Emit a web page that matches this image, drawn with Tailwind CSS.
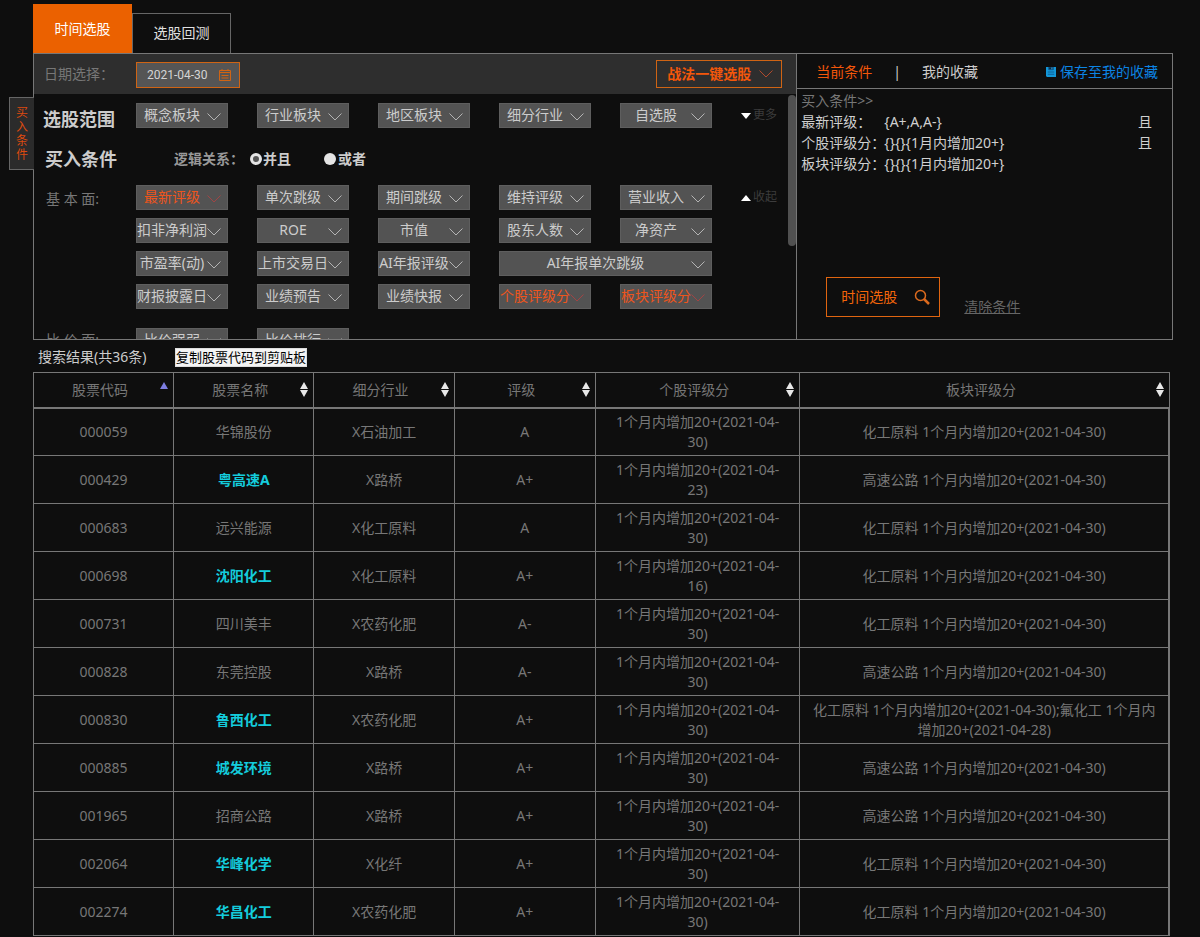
<!DOCTYPE html>
<html lang="zh-CN">
<head>
<meta charset="utf-8">
<title>时间选股</title>
<script src="https://cdn.jsdelivr.net/npm/@tailwindcss/browser@4"></script>
</head>
<body class="bg-[#0e0e0e] font-['Noto_Sans','Noto_Sans_CJK_SC',sans-serif] text-[14px] leading-5 text-[#777]">
<svg class="hidden" aria-hidden="true">
  <symbol id="chev" viewBox="0 0 14 8"><path d="M.5.5 7 7 13.500.5" fill="none" stroke="currentColor"/></symbol>
</svg>
<div class="h-screen overflow-hidden pt-1 pl-[33px] pr-[27px]">
  <nav class="flex h-[49px] items-end">
    <button class="h-[49px] w-[99px] bg-[#eb6100] text-white">时间选股</button>
    <button class="h-10 w-[99px] border border-b-0 border-[#666] pb-px text-[#e0e0e0]">选股回测</button>
  </nav>

  <main class="relative flex h-[287px] border border-[#777]">
    <div class="absolute top-[43px] -left-[25px] flex h-[73px] w-[25px] flex-col items-center justify-center border border-r-0 border-[#666] bg-[#2b2b2b] text-[12px] leading-[14px] text-[#dc4a10]"><span>买</span><span>入</span><span>条</span><span>件</span></div>

    <section class="flex min-w-0 flex-[763] flex-col">
      <div class="flex h-10 shrink-0 items-center bg-[#2e2e2e] pr-[14px] pl-[10px]">
        <label for="date" class="w-[92px]">日期选择：</label>
        <div class="mt-[2px] flex h-[26px] w-[104px] items-center border border-[#cf6414] bg-[#555] pr-2 pl-[10px]">
          <input id="date" value="2021-04-30" class="w-full min-w-0 bg-transparent font-['Roboto',sans-serif] text-[12px] text-[#d4d4d4] outline-none">
          <svg class="h-3 w-3 shrink-0 text-[#cf6414]" viewBox="0 0 12 12" fill="none" stroke="currentColor"><path d="M.5 1.500h11v10H.5zM.5 3.500h11M3 0v2M9 0v2M2.500 6.500h7M2.500 9h7"/></svg>
        </div>
        <button class="ml-auto flex h-7 w-[126px] items-center justify-between border border-[#cf6414] pr-2 pl-[10px] font-bold text-[#f4570a]"><span class="whitespace-nowrap">战法一键选股</span><svg class="h-2 w-[14px] text-[#b04a2c]"><use href="#chev"/></svg></button>
      </div>

      <div class="relative min-h-0 flex-1 overflow-hidden pt-[9px] pl-[9px]">
        <div class="absolute top-px right-0 h-[151px] w-2 rounded-sm bg-[#505050]"></div>
        <div class="flex">
          <h2 class="mt-1 w-[93px] text-[18px] leading-6 font-bold text-[#ccc]">选股范围</h2>
          <div class="grid grid-cols-5 gap-x-[29px]" data-filters="概念板块,行业板块,地区板块,细分行业,自选股"></div>
          <button class="ml-[29px] flex h-6 items-center gap-[2px] text-[12px] text-[#3c3c3c]"><svg class="mt-[2px] h-[6px] w-[10px] fill-white" viewBox="0 0 10 6"><path d="M0 0h10L5 6z"/></svg>更多</button>
        </div>
        <div class="mt-4 flex h-6 items-center">
          <h2 class="w-[131px] pl-[2px] text-[18px] leading-6 font-bold text-[#ccc]">买入条件</h2>
          <div class="flex items-center font-bold text-[#999]">
            <span class="w-[76px]">逻辑关系：</span>
            <label class="flex w-[74px] items-center gap-px text-[#ccc]"><input type="radio" name="rel" checked class="h-3 w-3 appearance-none rounded-full border-[3px] border-[#e4e4e4] bg-[#555]">并且</label>
            <label class="flex items-center gap-[2px] text-[#ccc]"><input type="radio" name="rel" class="h-3 w-3 appearance-none rounded-full bg-[#e4e4e4]">或者</label>
          </div>
        </div>
        <div class="mt-[14px] flex">
          <h3 class="mt-1 w-[93px] pl-[3px] whitespace-pre">基 本 面:</h3>
          <div class="grid grid-cols-5 gap-x-[29px] gap-y-2" data-filters="*最新评级,单次跳级,期间跳级,维持评级,营业收入,扣非净利润,ROE,市值,股东人数,净资产,市盈率(动),上市交易日,AI年报评级,+AI年报单次跳级,财报披露日,业绩预告,业绩快报,*个股评级分,*板块评级分"></div>
          <button class="ml-[29px] flex h-6 items-center gap-[2px] self-start text-[12px] text-[#3c3c3c]"><svg class="mt-[2px] h-[6px] w-[10px] fill-white" viewBox="0 0 10 6"><path d="M0 6h10L5 0z"/></svg>收起</button>
        </div>
        <div class="mt-[19px] flex">
          <h3 class="mt-[2px] w-[93px] pl-[3px] whitespace-pre">比 价 面:</h3>
          <div class="grid grid-cols-5 gap-x-[29px]" data-filters="比价强弱,比价排行"></div>
        </div>
      </div>
    </section>

    <aside class="flex min-w-0 flex-[375] flex-col border-l border-[#777] text-[#ccc]">
      <div class="flex h-[35px] items-center border-b border-[#777] pr-[14px] pl-[19px] pt-[2px]">
        <button class="text-[#f4570a]">当前条件</button>
        <span class="mx-[21px]">|</span>
        <button>我的收藏</button>
        <button class="ml-auto flex items-center gap-1 text-[#0c84e4]"><svg class="h-[10px] w-[10px]" viewBox="0 0 11 11"><path d="M0 0h11v11H1L0 10z" fill="#1397d8"/><path d="M3 0h5v3H3zM2 5.500h7M2 8h7" fill="#0e2a44" stroke="#0e5a90"/><path d="M6 .5h1v2H6z" fill="#4ab8ee"/></svg>保存至我的收藏</button>
      </div>
      <div class="flex flex-1 flex-col pt-[2px] pl-1">
        <p class="leading-5 text-[#777]">买入条件&gt;&gt;</p>
        <dl class="grid grid-cols-[83px_1fr_34px] leading-[21px] whitespace-nowrap text-[#d0d0d0]">
          <dt>最新评级：</dt><dd>{A+,A,A-}</dd><dd>且</dd>
          <dt>个股评级分：</dt><dd>{}{}{1月内增加20+}</dd><dd>且</dd>
          <dt>板块评级分：</dt><dd>{}{}{1月内增加20+}</dd>
        </dl>
        <div class="mt-auto mb-[22px] ml-[25px] flex items-end gap-6">
          <button class="flex h-10 w-[114px] items-center justify-between border border-[#e06510] pr-[9px] pl-[14px] text-[#f4660a]">时间选股<svg class="h-4 w-4" viewBox="0 0 16 16" fill="none" stroke="#dc6a1e"><circle cx="6.500" cy="6.500" r="5" stroke-width="1.500"/><path d="m10 10 5 5" stroke-width="2.500"/></svg></button>
          <a href="#" class="text-[#666] underline">清除条件</a>
        </div>
      </div>
    </aside>
  </main>

  <div class="flex h-8 items-center pl-[5px] pt-[2px]">
    <span class="w-[137px] text-[#ccc]">搜索结果(共36条)</span>
    <button class="h-[19px] border border-[#ddd] bg-[#f4f4f4] text-[13px] leading-4 text-black">复制股票代码到剪贴板</button>
  </div>

  <div class="pr-[3px]">
  <table class="w-full table-fixed border-collapse border border-[#777] text-center">
    <colgroup><col class="w-[12.35%]"><col class="w-[12.35%]"><col class="w-[12.35%]"><col class="w-[12.45%]"><col class="w-[18%]"><col></colgroup>
    <thead><tr id="head" class="h-[35px] border-b-2 border-[#777]"></tr></thead>
    <tbody id="rows"></tbody>
  </table>
  </div>
</div>
<script>
document.querySelectorAll('[data-filters]').forEach(box => {
  box.innerHTML = box.dataset.filters.split(',').map(raw => {
    const on = raw[0] === '*', wide = raw[0] === '+', name = raw.replace(/^[*+]/, '');
    return `<button class="${wide ? 'col-span-2' : 'w-[92px]'} flex h-[25px] items-center border border-[#5e5e5e] bg-[#535353] pr-[6px] pb-px ${on ? 'text-[#ee551c]' : 'text-[#ccc]'}"><span class="flex flex-1 justify-center whitespace-nowrap">${name}</span><svg class="mt-[3px] h-2 w-[14px] shrink-0 ${on ? 'text-[#a04444]' : 'text-[#b4b4b4]'}"><use href="#chev"/></svg></button>`;
  }).join('');
});
document.getElementById('head').innerHTML = ['股票代码','股票名称','细分行业','评级','个股评级分','板块评级分'].map((t, i) =>
  `<th class="border-r border-[#777] font-normal"><button class="flex w-full items-center pr-[5px] pl-[6px]"><span class="flex-1">${t}</span>${i
    ? '<svg class="h-[15px] w-2 fill-[#e8e8e8]" viewBox="0 0 8 15"><path d="M4 0 8 7H0zM0 8h8l-4 7z"/></svg>'
    : '<svg class="mb-2 h-[7px] w-2 fill-[#7d7de0]" viewBox="0 0 8 7"><path d="M4 0 8 7H0z"/></svg>'}</button></th>`).join('');
const chem = '化工原料 1个月内增加20+(2021-04-30)', road = '高速公路 1个月内增加20+(2021-04-30)';
document.getElementById('rows').innerHTML = [
  ['000059','华锦股份',0,'X石油加工','A','30',chem],
  ['000429','粤高速A',1,'X路桥','A+','23',road],
  ['000683','远兴能源',0,'X化工原料','A','30',chem],
  ['000698','沈阳化工',1,'X化工原料','A+','16',chem],
  ['000731','四川美丰',0,'X农药化肥','A-','30',chem],
  ['000828','东莞控股',0,'X路桥','A-','30',road],
  ['000830','鲁西化工',1,'X农药化肥','A+','30','化工原料 1个月内增加20+(2021-04-30);氟化工 1个月内增加20+(2021-04-28)'],
  ['000885','城发环境',1,'X路桥','A+','30',road],
  ['001965','招商公路',0,'X路桥','A+','30',road],
  ['002064','华峰化学',1,'X化纤','A+','30',chem],
  ['002274','华昌化工',1,'X农药化肥','A+','30',chem]
].map(r => `<tr class="h-12 border-b border-[#777]"><td class="border-r border-[#777]">${r[0]}</td><td class="border-r border-[#777] ${r[2] ? 'font-bold text-[#14ccdc]' : ''}">${r[1]}</td><td class="border-r border-[#777]">${r[3]}</td><td class="border-r border-[#777]">${r[4]}</td><td class="border-r border-[#777] px-4">1个月内增加20+(2021-04-<wbr>${r[5]})</td><td class="border-r-2 border-[#777] px-[10px]">${r[6]}</td></tr>`).join('');
</script>
</body>
</html>
